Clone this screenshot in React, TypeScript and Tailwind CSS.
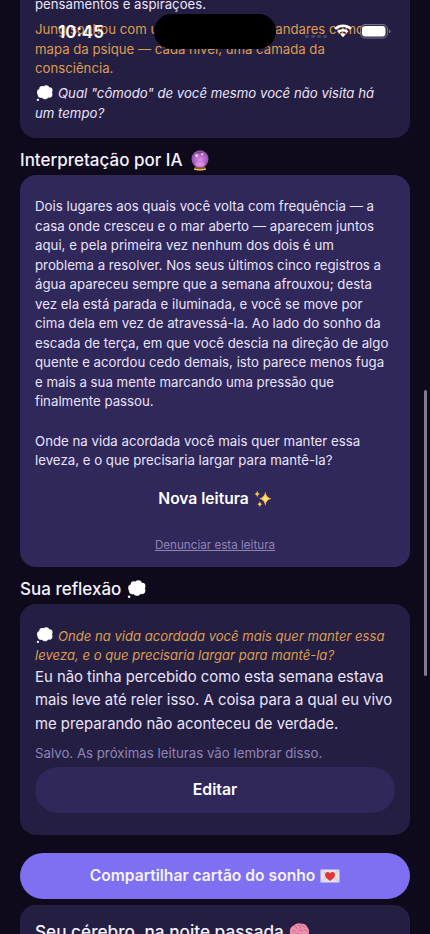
import React from "react";

type IconProps = { className?: string };

function Thought({ className }: IconProps) {
  return (
    <svg viewBox="0 0 18 18" className={className} aria-hidden="true">
      <g fill="#c9cbd3">
        <circle cx="5.2" cy="10" r="3.5" />
        <circle cx="9.5" cy="11.8" r="3.3" />
        <circle cx="14" cy="10.2" r="3.3" />
      </g>
      <g fill="#fff">
        <circle cx="4.4" cy="7.6" r="3.3" />
        <circle cx="6.6" cy="4.3" r="3.2" />
        <circle cx="10.8" cy="3.5" r="3.2" />
        <circle cx="14.2" cy="5.8" r="3.3" />
        <circle cx="14" cy="9.6" r="3.3" />
        <circle cx="9.8" cy="11.2" r="3.4" />
        <circle cx="5.6" cy="10.2" r="3.2" />
        <circle cx="9.8" cy="7" r="5" />
        <circle cx="2" cy="15.8" r="1.2" />
      </g>
    </svg>
  );
}

function CrystalBall({ className }: IconProps) {
  return (
    <svg viewBox="0 0 18 21" className={className} aria-hidden="true">
      <defs>
        <radialGradient id="ball" cx="0.5" cy="0.55" r="0.55">
          <stop offset="0" stopColor="#d98be4" />
          <stop offset="0.6" stopColor="#b263c6" />
          <stop offset="1" stopColor="#85509f" />
        </radialGradient>
      </defs>
      <path d="M4 16.5h10l1.300 3.200q-6.300 1.300-12.600 0z" fill="#8c5424" />
      <path d="M3.200 19.200q5.800 1.200 11.600 0" stroke="#efc766" strokeWidth="1.300" fill="none" />
      <ellipse cx="9" cy="9" rx="8.500" ry="8.800" fill="url(#ball)" />
      <ellipse cx="9" cy="14.500" rx="4.500" ry="2.200" fill="#eba9f0" opacity="0.600" />
      <path d="M5.500 2.600Q9 .9 12.500 2.600 9 4 5.500 2.600z" fill="#7d3358" opacity="0.700" />
      <circle cx="5.600" cy="5.600" r="1.300" fill="#fff" opacity="0.850" />
      <circle cx="11.300" cy="4.200" r="0.900" fill="#fff" opacity="0.850" />
    </svg>
  );
}

function SparklesIcon({ className }: IconProps) {
  return (
    <svg viewBox="0 0 18 18" className={className} aria-hidden="true">
      <path d="M11.300 1.600q.7 6.100 6.200 7.200-5.500 1.100-6.200 7.200-.7-6.100-6.200-7.200 5.500-1.100 6.200-7.200z" fill="#fcc63d" />
      <path d="M11.300 5q.5 3.200 3.300 3.800-2.800.6-3.300 3.800-.5-3.200-3.300-3.800 2.800-.6 3.300-3.800z" fill="#ffe78e" />
      <path d="M3.200.8q.3 2.700 2.700 3.200-2.400.5-2.700 3.200Q2.900 4.500.5 4q2.400-.5 2.700-3.200z" fill="#fcc63d" />
      <path d="M5.800 11.200q.3 2.500 2.400 3-2.100.5-2.400 3-.3-2.500-2.400-3 2.100-.5 2.400-3z" fill="#fcc63d" />
    </svg>
  );
}

function LoveLetter({ className }: IconProps) {
  return (
    <svg viewBox="0 0 20 14" className={className} aria-hidden="true">
      <rect x="0.500" y="0.500" width="19" height="13" rx="0.600" fill="#e4e2e2" />
      <path d="M.7 13.300 8 6.500M19.300 13.300 12 6.500M.7.8l7.500 6q1.800 1.400 3.600 0l7.500-6" stroke="#b9b5ba" strokeWidth="0.700" fill="none" />
      <path d="M10 12C6.500 9.700 5 8 5 5.800 5 3.900 6.300 2.900 7.600 2.900c1 0 1.900.5 2.400 1.500.5-1 1.400-1.500 2.400-1.500 1.300 0 2.600 1 2.600 2.900C15 8 13.500 9.700 10 12z" fill="#e5343a" />
    </svg>
  );
}

function Brain({ className }: IconProps) {
  return (
    <svg viewBox="0 0 22 20" className={className} aria-hidden="true">
      <path d="M1 10.500C.4 7 2.400 4.300 5 3.300 7.500.6 11 .2 13.500 1.300c3-.2 5.300 1.700 6 4.200 1.800 2 2.100 5 .6 7.200-.5 2.300-2.700 3.600-4.800 3.100l-1.600 3-2.600-.4-.8-3.100c-2.300 1.200-5 .9-6.200-.7C2.100 14.300.9 12.500 1 10.500z" fill="#ee93ae" />
      <path d="M3 9.500c1.500-1.800 3.200-1.200 4 0M5.500 4.500c1.500-.5 3 .3 3.100 2M9.500 3c2-.4 3 1 2.700 2.700M13.800 2.700c.2 1.800 1.300 2.500 3 2M10 8.500c1.500-1.400 3.400-.7 3.800 1M15.500 7.500c1.500-.5 3 .3 3.300 2M3.600 12.700c1.700-.8 3.400 0 5-.6 1.700-.7 3-.5 4 .7M14.500 12.800c1.400.8 3 .4 4-.8" stroke="#c3577f" strokeWidth="0.900" fill="none" strokeLinecap="round" />
    </svg>
  );
}

function Lines({ items }: { items: string[] }) {
  return (
    <>
      {items.map((line, i) => (
        <span key={i} className="block whitespace-nowrap">
          {line || "\u00a0"}
        </span>
      ))}
    </>
  );
}

const reading = [
  "Dois lugares aos quais você volta com frequência — a",
  "casa onde cresceu e o mar aberto — aparecem juntos",
  "aqui, e pela primeira vez nenhum dos dois é um",
  "problema a resolver. Nos seus últimos cinco registros a",
  "água apareceu sempre que a semana afrouxou; desta",
  "vez ela está parada e iluminada, e você se move por",
  "cima dela em vez de atravessá-la. Ao lado do sonho da",
  "escada de terça, em que você descia na direção de algo",
  "quente e acordou cedo demais, isto parece menos fuga",
  "e mais a sua mente marcando uma pressão que",
  "finalmente passou.",
  "",
  "Onde na vida acordada você mais quer manter essa",
  "leveza, e o que precisaria largar para mantê-la?",
];

function StatusBar() {
  return (
    <div className="absolute inset-x-0 top-0 h-[62px]">
      <span className="absolute left-[58px] top-[20px] text-[17px] font-semibold leading-6 text-white">10:45</span>
      <div className="absolute left-[154px] top-[14px] h-[35px] w-[122px] rounded-full bg-black" />
      <div className="absolute left-[305px] top-[34.5px] flex gap-[2.5px]">
        <i className="size-[3.5px] rounded-full bg-[#4a4463]" />
        <i className="size-[3.5px] rounded-full bg-[#4a4463]" />
        <i className="size-[3.5px] rounded-full bg-[#4a4463]" />
        <i className="size-[3.5px] rounded-full bg-[#4a4463]" />
      </div>
      <svg viewBox="0 0 18 14" className="absolute left-[334px] top-[24px] h-[14px] w-[18px]" fill="#fff">
        <path d="M9 .4C5.700.4 2.700 1.600.5 3.700q-.3.3 0 .6l1.200 1.200q.3.3.6 0C4.100 3.900 6.400 3 9 3s4.900.9 6.700 2.500q.3.300.6 0l1.200-1.200q.3-.3 0-.6C15.300 1.600 12.300.4 9 .4z" />
        <path d="M9 4.900c-2.100 0-3.900.8-5.300 2q-.3.300 0 .6l1.300 1.300q.3.300.6 0C6.500 8 7.700 7.500 9 7.500s2.500.5 3.400 1.300q.3.300.6 0l1.300-1.300q.3-.3 0-.6c-1.400-1.200-3.200-2-5.300-2z" />
        <path d="M9 9.300c-.9 0-1.700.3-2.300.8q-.3.300 0 .6L8.700 12.900q.3.300.6 0l2-2.200q.3-.3 0-.6C10.700 9.600 9.900 9.300 9 9.300z" />
      </svg>
      <svg viewBox="0 0 31 15" className="absolute left-[360px] top-[24px] h-[15px] w-[31px]">
        <rect x="0.500" y="0.500" width="27" height="13.500" rx="4.500" fill="#3a3353" fillOpacity="0.600" stroke="#777189" />
        <rect x="2" y="2" width="23.500" height="10.500" rx="3.200" fill="#fff" />
        <path d="M29 5.200q1.500.6 1.500 2t-1.500 2z" fill="#777189" />
      </svg>
    </div>
  );
}

export default function App() {
  return (
    <div className="relative h-[934px] w-[430px] overflow-hidden bg-[#0e0a1c] px-5 font-['Inter',sans-serif] text-[#e9e3fc]">
      {/* DREAM SYMBOL CARD */}
      <section className="h-[138px] overflow-hidden rounded-b-[16px] bg-[#251e43] px-[15px] text-[13.2px] leading-[19.5px]">
        <p className="-mt-[5.5px] whitespace-nowrap">pensamentos e aspirações.</p>
        <p className="mt-[6px] text-[#dc9d50]">
          <Lines items={["Jung sonhou com uma casa de vários andares como", "mapa da psique — cada nível, uma camada da", "consciência."]} />
        </p>
        <p className="mt-[5.5px] italic">
          <span className="flex items-center whitespace-nowrap">
            <Thought className="ml-px mr-[5px] size-[17px] shrink-0" />
            Qual "cômodo" de você mesmo você não visita há
          </span>
          um tempo?
        </p>
      </section>

      {/* AI READING */}
      <h2 className="flex h-[37px] items-center pt-[8px] text-[17px] font-medium text-[#f5f1ff]">
        Interpretação por IA
        <CrystalBall className="ml-[8px] h-[21px] w-[18px]" />
      </h2>
      <section className="h-[392px] rounded-[16px] bg-[#30275a] px-[15px] pt-[22px]">
        <p className="text-[13.25px] leading-[19.55px]">
          <Lines items={reading} />
        </p>
        <button className="mt-[16px] flex h-[24px] w-full items-center justify-center text-[15.6px] font-semibold text-white">
          Nova leitura
          <SparklesIcon className="ml-[5px] size-[18px]" />
        </button>
        <a href="#" className="mt-[25.5px] block text-center text-[11.65px] leading-[18px] text-[#8f85b4] underline">
          Denunciar esta leitura
        </a>
      </section>

      {/* REFLECTION */}
      <h2 className="flex h-[37px] items-center pt-[8px] text-[17px] font-medium text-[#f5f1ff]">
        Sua reflexão
        <Thought className="mb-px ml-[6px] size-[19px]" />
      </h2>
      <section className="h-[231px] rounded-[16px] bg-[#251e43] px-[15px] pt-[22.5px]">
        <p className="text-[13.1px] italic leading-[19.5px] text-[#dc9d50]">
          <span className="flex items-center whitespace-nowrap">
            <Thought className="mb-[2px] ml-px mr-[5px] size-[17px] shrink-0" />
            Onde na vida acordada você mais quer manter essa
          </span>
          leveza, e o que precisaria largar para mantê-la?
        </p>
        <p className="text-[14.87px] leading-[23.5px]">
          <Lines items={["Eu não tinha percebido como esta semana estava", "mais leve até reler isso. A coisa para a qual eu vivo", "me preparando não aconteceu de verdade."]} />
        </p>
        <p className="mt-[6.5px] text-[13.25px] leading-[20px] text-[#8f85b4]">Salvo. As próximas leituras vão lembrar disso.</p>
        <button className="mt-[4px] block h-[46px] w-full rounded-full bg-[#30275a] pt-px text-[15.8px] font-semibold text-white">
          Editar
        </button>
      </section>

      <button className="mt-[17.5px] flex h-[46.5px] w-full items-center justify-center rounded-full bg-[#7e70f0] text-[15.65px] font-semibold text-[#f5f1ff]">
        Compartilhar cartão do sonho
        <LoveLetter className="ml-[5px] h-[14px] w-[20px]" />
      </button>

      {/* BRAIN CARD */}
      <section className="mt-[6px] h-[80px] rounded-[16px] bg-[#251e43] px-[15px] pt-[15px]">
        <h2 className="flex h-[24px] items-center text-[17.2px] font-medium text-[#f5f1ff]">
          Seu cérebro, na noite passada
          <Brain className="ml-[5px] h-[20px] w-[21px]" />
        </h2>
      </section>

      <div className="absolute left-[424px] top-[390px] h-[286px] w-[3px] rounded-full bg-[#817d8c]" />
      <StatusBar />
    </div>
  );
}
